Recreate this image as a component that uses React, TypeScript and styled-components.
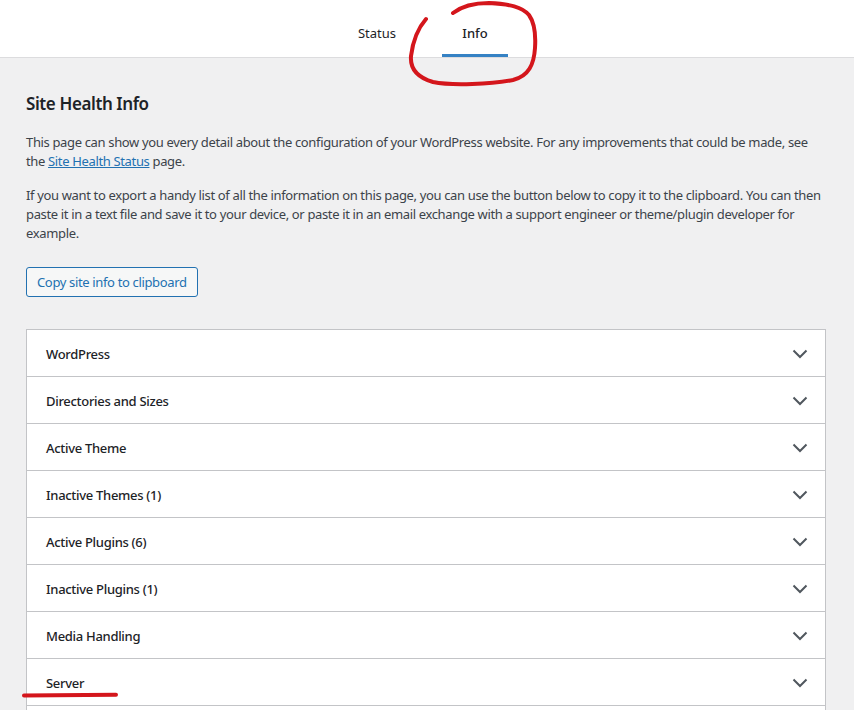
import * as React from 'react';
import styled, { createGlobalStyle } from 'styled-components';

const GlobalStyle = createGlobalStyle`
  html, body {
    margin: 0;
    padding: 0;
    background: #f0f0f1;
    color: #3c434a;
    font-family: "Noto Sans", "Open Sans", "DejaVu Sans", sans-serif;
    font-size: 13px;
    letter-spacing: -0.35px;
  }
`;

const Page = styled.div`
  position: relative;
  min-height: 710px;
  overflow: hidden;
`;

const Header = styled.div`
  background: #fff;
  border-bottom: 1px solid #dcdcde;
  display: flex;
  justify-content: center;
  padding-right: 2px;
`;

const Tabs = styled.nav`
  display: flex;
`;

const Tab = styled.a<{ $active?: boolean }>`
  display: block;
  width: 66px;
  margin: 0 16px;
  padding: 24px 0 14px;
  line-height: 19px;
  text-align: center;
  color: #1d2327;
  text-decoration: none;
  letter-spacing: 0;
  font-weight: ${p => (p.$active ? 500 : 400)};
  box-shadow: ${p => (p.$active ? 'inset 0 -3px #3582c4' : 'none')};
`;

const Body = styled.div`
  padding: 0 28px 0 26px;
`;

const Title = styled.h2`
  margin: 34px 0 0;
  font-size: 17px;
  line-height: 23px;
  font-weight: 600;
  letter-spacing: -0.4px;
  color: #1d2327;
`;

const Text = styled.p<{ $gap: number }>`
  margin: ${p => p.$gap}px 0 0;
  line-height: 19px;
`;

const Link = styled.a`
  color: #2271b1;
  text-decoration: underline;
`;

const CopyButton = styled.button`
  margin-top: 24px;
  height: 30px;
  padding: 0 10px;
  border: 1px solid #2271b1;
  border-radius: 3px;
  background: #f6f7f7;
  color: #2271b1;
  font-family: inherit;
  font-size: 13px;
  letter-spacing: inherit;
`;

const Accordion = styled.div`
  margin-top: 32px;
  background: #fff;
  border: 1px solid #c3c4c7;
  border-bottom: 0;
`;

const Row = styled.div`
  box-sizing: border-box;
  display: flex;
  align-items: center;
  justify-content: space-between;
  height: 47px;
  padding: 2px 17px 0 19px;
  border-bottom: 1px solid #c3c4c7;
  color: #1d2327;
  font-weight: 500;
  letter-spacing: -0.3px;
`;

const Chevron = () => (
  <svg width="16" height="10" viewBox="0 0 16 10">
    <polyline points="1.5,1.5 8,8 14.5,1.5" fill="none" stroke="#50575e" strokeWidth="2" />
  </svg>
);

const Marks = styled.svg`
  position: absolute;
  top: 0;
  left: 0;
  pointer-events: none;
`;

const sections = [
  'WordPress',
  'Directories and Sizes',
  'Active Theme',
  'Inactive Themes (1)',
  'Active Plugins (6)',
  'Inactive Plugins (1)',
  'Media Handling',
  'Server',
  'Database',
  'WordPress Constants',
];

export default function App() {
  return (
    <Page>
      <GlobalStyle />
      <Header>
        <Tabs>
          <Tab href="#status">Status</Tab>
          <Tab href="#info" $active>Info</Tab>
        </Tabs>
      </Header>
      <Body>
        <Title>Site Health Info</Title>
        <Text $gap={18}>
          This page can show you every detail about the configuration of your WordPress website. For any improvements that could be made, see the <Link href="#status">Site Health Status</Link> page.
        </Text>
        <Text $gap={15}>
          If you want to export a handy list of all the information on this page, you can use the button below to copy it to the clipboard. You can then paste it in a text file and save it to your device, or paste it in an email exchange with a support engineer or theme/plugin developer for example.
        </Text>
        <CopyButton>Copy site info to clipboard</CopyButton>
        <Accordion>
          {sections.map(s => (
            <Row key={s}>
              {s}
              <Chevron />
            </Row>
          ))}
        </Accordion>
      </Body>
      <Marks width="854" height="710" viewBox="0 0 854 710">
        <path
          d="M426 19 C419 27 413 40 411 56 C410 68 416 77 433 82 C452 86 492 84 513 80 C529 76 534 64 535 48 C536 33 534 22 529 15 C522 7 510 4 489 3 C474 3 462 6 453 13"
          fill="none"
          stroke="#d4161c"
          strokeWidth="4"
          strokeLinecap="round"
        />
        <path d="M24 695.5 L116 694.8" stroke="#d4161c" strokeWidth="4" strokeLinecap="round" />
      </Marks>
    </Page>
  );
}
